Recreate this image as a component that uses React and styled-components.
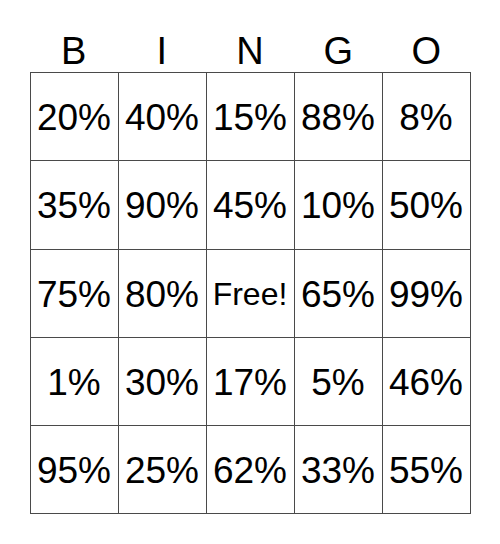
import React from "react";
import styled, { createGlobalStyle } from "styled-components";

const letters = ["B", "I", "N", "G", "O"];

const cells = [
  ["20%", "40%", "15%", "88%", "8%"],
  ["35%", "90%", "45%", "10%", "50%"],
  ["75%", "80%", "Free!", "65%", "99%"],
  ["1%", "30%", "17%", "5%", "46%"],
  ["95%", "25%", "62%", "33%", "55%"],
];

export default function App() {
  return (
    <>
      <GlobalStyle />
      <Page>
        <Card>
          <Header>
            {letters.map((l) => (
              <Letter key={l}>{l}</Letter>
            ))}
          </Header>
          <Grid>
            {cells.flat().map((c, i) => (
              <Cell key={i} free={c === "Free!"}>
                {c}
              </Cell>
            ))}
          </Grid>
        </Card>
      </Page>
    </>
  );
}

//styles

const GlobalStyle = createGlobalStyle`
  body {
    margin: 0;
    background: #ffffff;
    font-family: "Liberation Sans", Arial, sans-serif;
    color: #000000;
  }
`;

const Page = styled.div`
  width: 500px;
  height: 544px;
  display: flex;
  justify-content: center;
  padding-top: 32px;
  box-sizing: border-box;
`;

const Card = styled.div`
  width: 441px;
  display: flex;
  flex-direction: column;
`;

const Header = styled.div`
  display: grid;
  grid-template-columns: repeat(5, 1fr);
  height: 40px;
`;

const Letter = styled.div`
  font-size: 38px;
  line-height: 1;
  text-align: center;
`;

const Grid = styled.div`
  display: grid;
  grid-template-columns: repeat(5, 87px);
  grid-auto-rows: 87.3px;
  gap: 1px;
  padding: 1px;
  background: #4a4a4a;
`;

const Cell = styled.div`
  background: #ffffff;
  display: flex;
  align-items: center;
  justify-content: center;
  font-size: ${(props) => (props.free ? "32px" : "37px")};
  line-height: 1;
  white-space: nowrap;
  padding-top: 2px;
  box-sizing: border-box;
`;
